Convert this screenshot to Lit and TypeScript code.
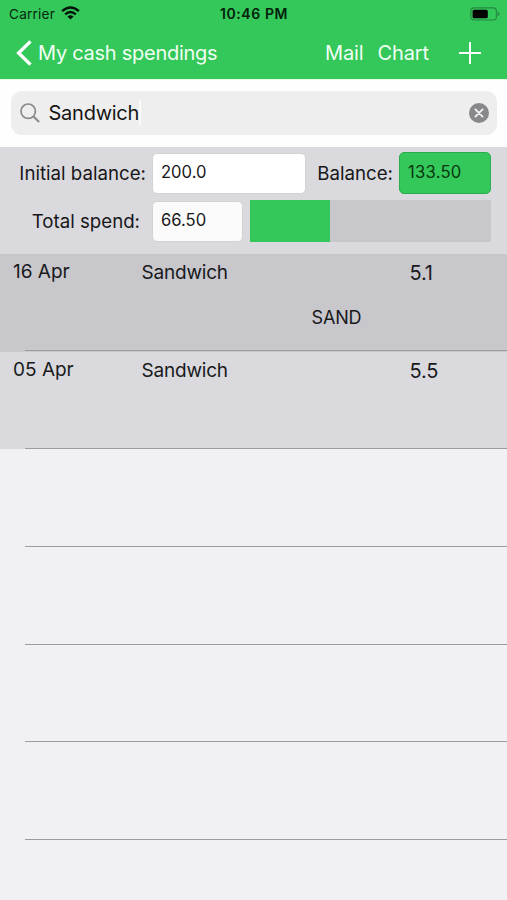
import { LitElement, html, css } from "lit";
import { customElement, property } from "lit/decorators.js";

interface Spending {
  date: string;
  name: string;
  amount: string;
  note?: string;
}

const spendings: Spending[] = [
  { date: "16 Apr", name: "Sandwich", amount: "5.1", note: "SAND" },
  { date: "05 Apr", name: "Sandwich", amount: "5.5" },
];

@customElement("status-bar")
class StatusBar extends LitElement {
  static styles = css`
    :host { display: grid; grid-template-columns: 1fr auto 1fr; align-items: center; height: 28px; padding: 0 7px 0 9px; font-size: 13.6px; color: #06280f; }
    .left { display: flex; align-items: center; gap: 6px; letter-spacing: 0.22px; }
    .left svg { margin-top: -2px; }
    .time { font-weight: 600; font-size: 14px; letter-spacing: 0.6px; line-height: 18px; padding-bottom: 1px; margin-left: -1px; color: #03200b; }
    .right { display: flex; justify-content: flex-end; margin-top: -1px; }
    svg { display: block; }
  `;
  render() {
    return html`
      <div class="left"><span>Carrier</span>
        <svg width="19" height="14" viewBox="0 0 19 14" fill="none" stroke="#03130a" stroke-width="2.4">
          <path d="M1.1 5.2Q9.5-2.2 17.9 5.2"/><path d="M4.2 8.3Q9.5 3.7 14.8 8.3"/>
          <path d="M6.4 10.5Q9.5 8.1 12.6 10.5L9.5 13.6Z" fill="#03130a" stroke="none"/>
        </svg>
      </div>
      <div class="time">10:46 PM</div>
      <div class="right">
        <svg width="30" height="14" viewBox="0 0 30 14">
          <rect x=".8" y=".8" width="25.6" height="12.2" rx="3.2" fill="none" stroke="#238a40" stroke-width="1.2"/>
          <rect x="2.6" y="2.7" width="15.2" height="8.6" rx="1.6" fill="#000"/>
          <path d="M27.6 4.7Q29.6 5.3 29.6 6.9T27.6 9.1Z" fill="#238a40"/>
        </svg>
      </div>`;
  }
}

@customElement("nav-bar")
class NavBar extends LitElement {
  static styles = css`
    :host { display: flex; align-items: center; height: 51px; box-sizing: border-box; padding: 0 26px 2px 16px; font-size: 20px; color: #f0fff3; }
    .back { display: flex; align-items: center; gap: 6px; flex: 1; letter-spacing: -0.27px; }
    .mail { margin-right: 14px; letter-spacing: -0.15px; }
    .chart { margin-right: 30px; letter-spacing: -0.1px; }
    svg { display: block; }
  `;
  render() {
    return html`
      <div class="back">
        <svg width="16" height="26" viewBox="0 0 16 26" fill="none" stroke="#fff" stroke-width="3.4"><path d="M14.5 1.4 2.6 13l11.9 11.6"/></svg>
        <span>My cash spendings</span>
      </div>
      <span class="mail">Mail</span>
      <span class="chart">Chart</span>
      <svg width="22" height="22" viewBox="0 0 22 22" stroke="#fff" stroke-width="1.9"><path d="M11 0v22M0 11h22"/></svg>`;
  }
}

@customElement("search-field")
class SearchField extends LitElement {
  @property() value = "";
  static styles = css`
    :host { display: block; height: 68px; box-sizing: border-box; padding: 11px 10px 0 11px; background: #fefefe; border-top: 1px solid #e3fbe8; }
    .box { display: flex; align-items: center; height: 43.6px; box-sizing: border-box; padding: 0 8px 0 9px; border-radius: 11px; background: #eee; font-size: 20px; color: #151515; }
    .text { margin-left: 8.5px; letter-spacing: -0.25px; }
    .caret { width: 2px; height: 25px; margin-right: auto; background: #fafafa; }
    svg { display: block; }
  `;
  render() {
    return html`<div class="box">
      <svg width="20" height="20" viewBox="0 0 20 20" fill="none" stroke="#8a8a8e" stroke-width="1.7"><circle cx="8.2" cy="8.2" r="7.2"/><path d="m13.3 13.3 5.8 5.8" stroke-width="2.1"/></svg>
      <span class="text">${this.value}</span><span class="caret"></span>
      <svg width="20" height="20" viewBox="0 0 20 20"><circle cx="10" cy="10" r="10" fill="#88888c"/><path d="m6.4 6.4 7.2 7.2M13.6 6.4l-7.2 7.2" stroke="#f2f2f2" stroke-width="1.9" stroke-linecap="round"/></svg>
    </div>`;
  }
}

@customElement("balance-panel")
class BalancePanel extends LitElement {
  static styles = css`
    :host { display: block; height: 106.8px; box-sizing: border-box; padding: 5px 16px 0 0; background: #dadade; color: #17171a; }
    .line { display: flex; align-items: center; height: 42px; margin-bottom: 6px; }
    .label { font-size: 18.7px; text-align: right; white-space: nowrap; padding-top: 2px; }
    .initial { width: 146px; margin-right: 6px; }
    .total { width: 140px; margin-right: 12px; }
    .balance { flex: 1; margin-right: 6px; }
    .field { box-sizing: border-box; height: 41px; padding: 0 8px 0 8px; display: flex; align-items: center; border-radius: 5px; border: 1px solid #d2d2d5; background: #fff; font-size: 16.6px; }
    .wide { width: 154px; }
    .small { width: 91px; background: #fbfbfb; }
    .green { width: 92px; height: 42px; background: #34c759; border-color: #2dac4d; color: #07370f; letter-spacing: 0.25px; }
    .track { flex: 1; height: 42px; margin-left: 7px; background: #c7c7cc; }
    .fill { height: 100%; background: #34c759; }
  `;
  render() {
    const spent = 66.5;
    const initial = 200;
    return html`
      <div class="line">
        <span class="label initial">Initial balance:</span><div class="field wide">${initial.toFixed(1)}</div>
        <span class="label balance">Balance:</span><div class="field green">${(initial - spent).toFixed(2)}</div>
      </div>
      <div class="line">
        <span class="label total">Total spend:</span><div class="field small">${spent.toFixed(2)}</div>
        <div class="track"><div class="fill" style="width:${(spent / initial) * 100}%"></div></div>
      </div>`;
  }
}

@customElement("spending-list")
class SpendingList extends LitElement {
  static styles = css`
    :host { display: block; }
    .row { height: 97.8px; box-sizing: border-box; display: grid; grid-template-columns: 128.5px 268px 1fr; grid-template-rows: 36px 54px; padding-left: 13px; color: #19191c; font-size: 19px;
      background: linear-gradient(#9c9ca0, #9c9ca0) right bottom / calc(100% - 25px) 1.3px no-repeat; }
    .row > * { display: flex; align-items: center; }
    .entry { background-color: #dadade; }
    .noted { background-color: #c7c7cc; }
    .date { height: 38px; }
    .name { height: 39px; letter-spacing: -0.2px; }
    .amount { height: 39px; font-size: 20px; letter-spacing: -0.2px; }
    .note { grid-column: 2 / 4; padding: 1px 0 0 170px; font-size: 18px; letter-spacing: -0.15px; }
  `;
  render() {
    return html`
      ${spendings.map((s) => html`
        <div class="row entry ${s.note ? "noted" : ""}">
          <span class="date">${s.date}</span><span class="name">${s.name}</span><span class="amount">${s.amount}</span>
          ${s.note ? html`<span class="note">${s.note}</span>` : ""}
        </div>`)}
      ${[0, 1, 2, 3].map(() => html`<div class="row"></div>`)}`;
  }
}

@customElement("app-root")
class AppRoot extends LitElement {
  static styles = css`
    :host { display: block; height: 900px; overflow: hidden; background: #f0f0f5; font-family: Inter, "Liberation Sans", sans-serif; line-height: 1.2; }
    .top { background: #34c759; }
  `;
  render() {
    return html`
      <div class="top"><status-bar></status-bar><nav-bar></nav-bar></div>
      <search-field value="Sandwich"></search-field>
      <balance-panel></balance-panel>
      <spending-list></spending-list>`;
  }
}
